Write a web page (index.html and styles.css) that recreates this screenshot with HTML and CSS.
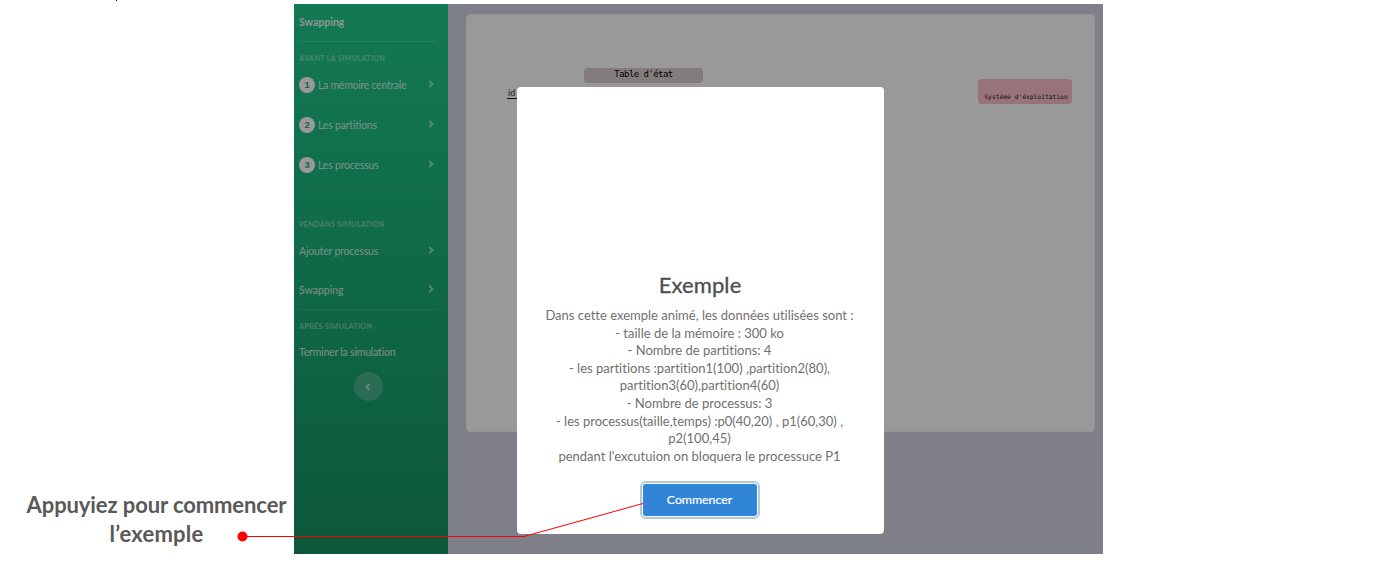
FILE: index.html
```html
<!DOCTYPE html>
<html lang="fr">
<head>
<meta charset="utf-8">
<title>Swapping</title>
<link rel="stylesheet" href="styles.css">
</head>
<body>
<div class="cursor-mark"></div>
<div class="page">
  <aside class="note"><p class="note-first">Appuyiez pour commencer</p><p class="note-second">l’exemple</p></aside>
  <div class="app">
    <nav class="sidebar">
      <div class="brand">Swapping</div>
      <hr class="divider">
      <div class="heading heading-before">AVANT LA SIMULATION</div>
      <a class="item item-one"><span class="num">1</span><span class="label central">La mémoire centrale</span><svg class="chev" viewBox="0 0 6 8"><path d="M1.3 1 4.5 4 1.3 7"/></svg></a>
      <a class="item item-two"><span class="num">2</span><span class="label">Les partitions</span><svg class="chev" viewBox="0 0 6 8"><path d="M1.3 1 4.5 4 1.3 7"/></svg></a>
      <a class="item item-three"><span class="num">3</span><span class="label">Les processus</span><svg class="chev" viewBox="0 0 6 8"><path d="M1.3 1 4.5 4 1.3 7"/></svg></a>
      <div class="heading heading-during">PENDANS SIMULATION</div>
      <a class="item"><span class="label">Ajouter processus</span><svg class="chev" viewBox="0 0 6 8"><path d="M1.3 1 4.5 4 1.3 7"/></svg></a>
      <a class="item item-swap"><span class="label swap">Swapping</span><svg class="chev" viewBox="0 0 6 8"><path d="M1.3 1 4.5 4 1.3 7"/></svg></a>
      <hr class="divider">
      <div class="heading heading-after">APRÉS SIMULATION</div>
      <a class="item"><span class="label">Terminer la simulation</span></a>
      <button class="toggle"><svg class="toggle-icon" viewBox="0 0 6 8"><path d="M4.5 1 1.5 4 4.5 7"/></svg></button>
    </nav>
    <main class="main">
      <section class="card">
        <div class="left-col">
          <div class="state">Table d'état</div>
          <div class="id-cell">id</div>
        </div>
        <div class="system">Systéme d'éxploitation</div>
      </section>
    </main>
    <div class="overlay"></div>
    <div class="modal">
      <h2 class="title">Exemple</h2>
      <div class="text">
        <p>Dans cette exemple animé, les données utilisées sont :</p>
        <p>- taille de la mémoire : 300 ko</p>
        <p>- Nombre de partitions: 4</p>
        <p>- les partitions :partition1(100) ,partition2(80),</p>
        <p>partition3(60),partition4(60)</p>
        <p>- Nombre de processus: 3</p>
        <p>- les processus(taille,temps) :p0(40,20) , p1(60,30) ,</p>
        <p>p2(100,45)</p>
        <p>pendant l'excutuion on bloquera le processuce P1</p>
      </div>
      <button class="confirm">Commencer</button>
    </div>
  </div>
</div>
<svg class="pointer" viewBox="0 0 1383 569"><path d="M242 536.5H524L643 503.5"/><circle cx="242.5" cy="536.5" r="5"/></svg>
</body>
</html>
```
FILE: styles.css
```css
* { box-sizing: border-box; }
body { margin: 0; width: 1383px; height: 569px; overflow: hidden; background: #fff; font-family: Lato, sans-serif; font-variant-ligatures: none; position: relative; }
p, h2 { margin: 0; }
.cursor-mark { position: absolute; left: 116px; top: 0; width: 1px; height: 1px; background: #000; }
.page { display: flex; padding-top: 4px; }
.note { width: 294px; padding: 486px 0 0 20px; font: 700 22px/29px Lato, sans-serif; color: #595959; text-align: center; white-space: nowrap; }
.note-first { width: 273px; letter-spacing: -.1px; }
.note-second { width: 273px; letter-spacing: .2px; }
.app { position: relative; display: flex; width: 809px; height: 550px; }
.sidebar { width: 154px; padding: 0 11px 0 5px; background: linear-gradient(180deg, #1fcb8b 0%, #159261 100%); color: rgba(255,255,255,.8); display: flex; flex-direction: column; }
.brand { height: 37px; font-size: 10.5px; font-weight: 700; line-height: 36px; color: rgba(255,255,255,.92); flex: none; }
.divider { width: 138px; height: 1px; margin: 0; border: 0; background: rgba(255,255,255,.17); flex: none; }
.heading { font-size: 7.2px; line-height: 10px; font-weight: 900; color: rgba(255,255,255,.42); white-space: nowrap; flex: none; letter-spacing: .3px; }
.heading-before { padding-top: 12px; height: 29px; }
.heading-during { padding-top: 45px; height: 66px; }
.heading-after { padding-top: 12px; height: 32px; }
.item { display: flex; align-items: center; height: 20px; font-size: 10.5px; letter-spacing: -.2px; white-space: nowrap; flex: none; }
.item-one { margin-top: 4px; }
.item-two { margin-top: 20px; }
.item-three { margin-top: 20px; }
.item-swap { margin-top: 19px; margin-bottom: 9px; }
.label { margin-top: -1px; }
.central { letter-spacing: -.27px; }
.swap { letter-spacing: 0; }
.num { width: 16px; height: 16px; margin-right: 3px; border-radius: 50%; background: #fff; color: #1cab76; font: 700 9.5px/16px "Liberation Sans", sans-serif; text-align: center; }
.chev { width: 6px; height: 8px; margin: -2px 3px 0 auto; fill: none; stroke: rgba(255,255,255,.55); stroke-width: 1.9; }
.toggle { width: 29px; height: 29px; margin: 10px 0 0 54.5px; padding: 0; border: 0; border-radius: 50%; background: rgba(255,255,255,.2); display: grid; place-items: center; flex: none; }
.toggle-icon { width: 6px; height: 8px; fill: none; stroke: rgba(255,255,255,.6); stroke-width: 1.9; }
.main { flex: 1; padding: 10px 8px 0 18px; background: #d4d4e4; }
.card { display: flex; justify-content: space-between; align-items: flex-start; height: 418px; padding: 0 22px 0 40px; background: #fff; border: 1px solid #f4f5fa; border-radius: 4px; }
.left-col { padding-top: 53px; }
.state { width: 119px; height: 15px; margin-left: 77px; border-radius: 4px; background: #dbcfd0; font: 9px/12px "DejaVu Sans Mono", monospace; color: #000; text-align: center; letter-spacing: -.55px; }
.id-cell { width: 24px; height: 16px; border-bottom: 1px solid #111; font-size: 9px; line-height: 19px; padding-left: 1px; color: #333; }
.system { width: 94px; height: 25px; margin-top: 63.5px; padding-left: 2px; border-radius: 4px; background: #ffc0cb; font: 6.3px/36px "DejaVu Sans Mono", monospace; color: #222; text-align: center; white-space: nowrap; }
.overlay { position: absolute; inset: 0; background: rgba(0,0,0,.4); }
.modal { position: absolute; left: 223px; top: 83px; width: 367px; height: 447px; border-radius: 4px; background: #fff; display: flex; flex-direction: column; align-items: center; padding: 183px 2px 0 0; }
.title { font-size: 22px; line-height: 30px; font-weight: 400; color: #4d4d4d; -webkit-text-stroke: .3px #4d4d4d; letter-spacing: .1px; padding-left: 1px; }
.text { padding-top: 7px; width: 363px; text-align: center; font-size: 13px; line-height: 17.6px; color: #707070; white-space: nowrap; }
.confirm { width: 114px; height: 32px; margin-top: 19px; flex: none; border: 0; border-radius: 3px; background: #3085d6; color: #fff; font: 400 12.3px/30px Lato, sans-serif; -webkit-text-stroke: .2px #fff; box-shadow: 0 0 0 1px #fff, 0 0 0 3px #b4c8dc; }
.pointer { position: absolute; left: 0; top: 0; width: 1383px; height: 569px; pointer-events: none; fill: none; stroke: #f00; stroke-width: 1; }
.pointer circle { fill: #f00; stroke: none; }
```
